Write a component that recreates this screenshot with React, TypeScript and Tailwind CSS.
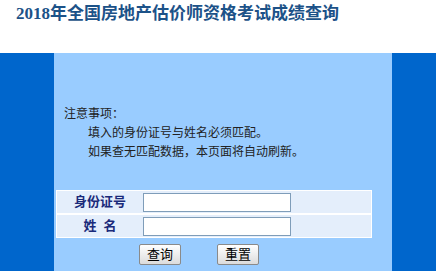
import React from 'react';

const cjk = '"Liberation Sans", "Noto Sans CJK SC", sans-serif';

const App: React.FC = () => {
  return (
    <div className="w-[436px] h-[271px] overflow-hidden bg-white" style={{ fontFamily: cjk }}>
      <div className="h-[53px] pl-[16px] pt-[3px]">
        <h1
          className="text-[17px] leading-[22px] font-bold text-[#1c5288]"
          style={{ fontFamily: '"Liberation Serif", "Noto Sans CJK SC", serif' }}
        >
          2018年全国房地产估价师资格考试成绩查询
        </h1>
      </div>

      <div className="flex h-[218px] bg-[#0066cc]">
        <div className="ml-[54px] w-[338px] bg-[#99ccff] pt-[52px]">
          <div className="pl-[10px] text-[12px] leading-[19px] text-[#222]">
            <p>注意事项：</p>
            <p className="pl-[24px]">填入的身份证号与姓名必须匹配。</p>
            <p className="pl-[24px]">如果查无匹配数据，本页面将自动刷新。</p>
          </div>

          <div className="ml-[2px] mt-[28px] w-[316px] border border-white bg-white flex flex-col gap-[2px]">
            <div className="flex h-[22px] items-center bg-[#e4eefb]">
              <div className="w-[86px] text-center text-[13px] font-bold text-[#1a2a7a]">身份证号</div>
              <input className="h-[19px] w-[148px] border border-[#7f9db9] bg-white outline-none" />
            </div>
            <div className="flex h-[22px] items-center bg-[#e4eefb]">
              <div className="w-[86px] whitespace-pre text-center text-[13px] font-bold text-[#1a2a7a]">姓  名</div>
              <input className="h-[19px] w-[148px] border border-[#7f9db9] bg-white outline-none" />
            </div>
          </div>

          <div className="mt-[6px] flex gap-[36px] pl-[85px]">
            <button className="h-[21px] w-[42px] rounded-[2px] border border-[#8a8a8a] bg-gradient-to-b from-white to-[#dcdcdc] text-[13px] leading-[19px] text-black">
              查询
            </button>
            <button className="h-[21px] w-[42px] rounded-[2px] border border-[#8a8a8a] bg-gradient-to-b from-white to-[#dcdcdc] text-[13px] leading-[19px] text-black">
              重置
            </button>
          </div>
        </div>
      </div>
    </div>
  );
};

export default App;
